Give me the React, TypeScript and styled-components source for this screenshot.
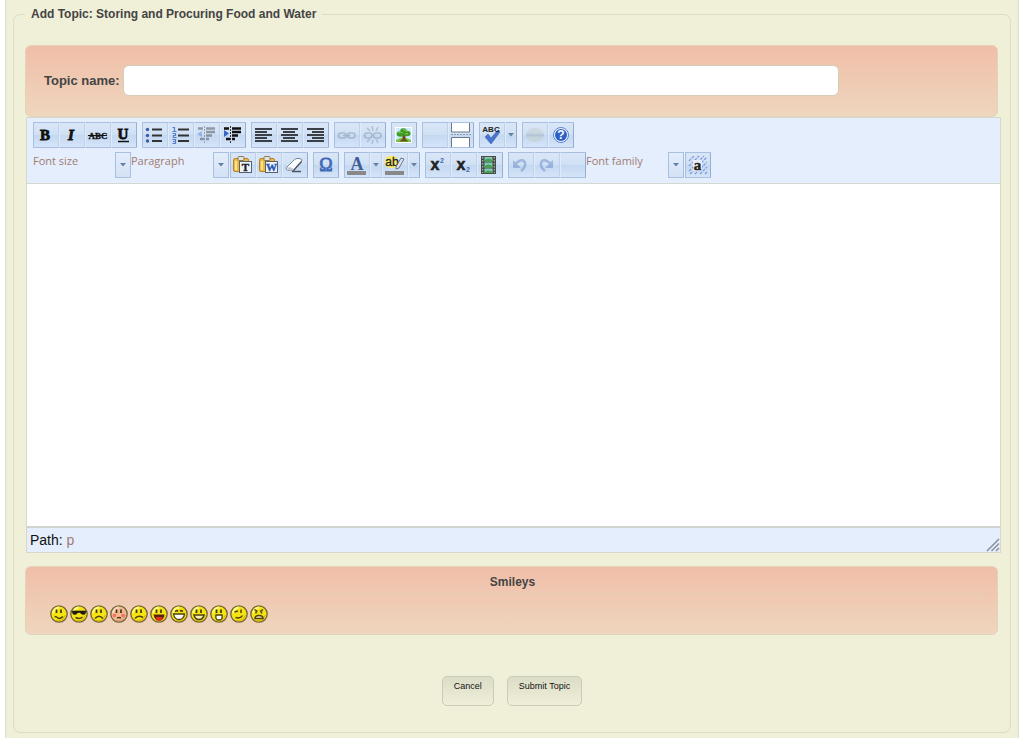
import React, { useState } from 'react';
import styled, { createGlobalStyle } from 'styled-components';

const GlobalStyle = createGlobalStyle`
  *, *::before, *::after { box-sizing: border-box; }
  body {
    margin: 0;
    background: #fff;
    font-family: "Liberation Sans", Arial, sans-serif;
    color: #444;
  }
`;

const Page = styled.main`
  min-height: 100vh;
  margin: 0 4px 0 5px;
  padding: 6px 7px 5px;
  background: #f0efd8;
  border: solid #dbdccb;
  border-width: 0 1px;
`;

const TopicFieldset = styled.fieldset`
  margin: 0;
  min-width: 0;
  padding: 23px 9px 26px 11px;
  border: 1px solid #dcdcc4;
  border-radius: 7px;
`;

const Legend = styled.legend`
  padding: 0 6px;
  font-size: 12px;
  line-height: 16px;
  font-weight: bold;
`;

const Panel = styled.section`
  margin-right: 3px;
  border: 1px solid #e3d3b8;
  border-radius: 6px;
  background: linear-gradient(#f0bea8, #efd6be);
`;

const NamePanel = styled(Panel)`
  display: flex;
  align-items: center;
  gap: 3px;
  height: 72px;
  padding: 0 158px 1px 18px;
`;

const NameLabel = styled.label`
  font-size: 13px;
  font-weight: bold;
  white-space: nowrap;
`;

const NameInput = styled.input`
  flex: 1;
  min-width: 0;
  height: 31px;
  padding: 0 8px;
  border: 1px solid #d3cdb9;
  border-radius: 6px;
  background: #fff;
  font: 13px "Liberation Sans", Arial, sans-serif;
`;

const Editor = styled.section`
  margin-left: 1px;
  border: 1px solid #d6d8cc;
`;

const Toolbar = styled.div`
  display: flex;
  flex-direction: column;
  gap: 4px;
  padding: 4px 6px 5px;
  background: #e5eefd;
  border-bottom: 1px solid #d4d7d2;
`;

const ToolRow = styled.div`
  display: flex;
  flex-wrap: wrap;
  gap: 5px;
`;

const Cluster = styled.div`
  display: flex;
  gap: 1px;
`;

const Group = styled.div`
  display: flex;
`;

const ToolButton = styled.button<{ $narrow?: boolean }>`
  display: flex;
  align-items: center;
  justify-content: center;
  width: ${p => (p.$narrow ? 12 : 26)}px;
  height: 26px;
  padding: 0;
  border: 1px solid #a8bfdf;
  border-left-color: #e0ebfa;
  border-right-color: #bfd2ec;
  background: linear-gradient(#d9e6f7 0%, #d0e0f4 50%, #c4d8f1 51%, #d5e4f8 100%);
  &:first-child { border-left-color: #a8bfdf; border-radius: 1px 0 0 1px; }
  &:last-child { border-right-color: #94aed4; border-radius: 0 1px 1px 0; }
  &:disabled svg { opacity: 0.35; }
`;

const ListBox = styled.div`
  display: grid;
  grid-template-columns: 82px 16px;
  height: 26px;
`;

const ListSelect = styled.select`
  grid-area: 1 / 1 / 2 / 3;
  appearance: none;
  height: 26px;
  padding: 0 16px 8px 0;
  border: 0;
  background: transparent;
  color: #a17c70;
  font: 11px/18px "Open Sans", sans-serif;
`;

const ListArrow = styled.span`
  grid-area: 1 / 2;
  display: flex;
  align-items: center;
  justify-content: center;
  border: 1px solid #a8bfdf;
  background: linear-gradient(#e3edfb, #d3e2f6);
  pointer-events: none;
`;

const EditArea = styled.textarea`
  display: block;
  width: 100%;
  height: 342px;
  padding: 8px;
  border: 0;
  resize: none;
  background: #fff;
  font: 14px "Liberation Sans", Arial, sans-serif;
`;

const StatusBar = styled.div`
  display: flex;
  align-items: flex-end;
  justify-content: space-between;
  height: 26px;
  padding-left: 3px;
  border-top: 2px solid #d0d4ce;
  background: #e5eefd;
  color: #111;
  font-size: 14px;
  line-height: 24px;
`;

const PathLink = styled.a`
  color: #a17c70;
  text-decoration: none;
`;

const SmileyPanel = styled(Panel)`
  height: 69px;
  margin-top: 13px;
  padding: 8px 12px 0 14px;
`;

const SmileyTitle = styled.h2`
  margin: 0;
  padding-bottom: 4px;
  border-bottom: 1px solid #e3ceb6;
  font-size: 12px;
  line-height: 14px;
  text-align: center;
`;

const SmileyRow = styled.div`
  display: flex;
  gap: 2px;
  padding: 11px 10px 0;
`;

const SmileyButton = styled.button`
  display: flex;
  width: 18px;
  height: 18px;
  padding: 0;
  border: 0;
  background: none;
`;

const Actions = styled.div`
  display: flex;
  justify-content: center;
  gap: 13px;
  margin: 41px 2px 0 0;
`;

const ActionButton = styled.button`
  height: 30px;
  padding: 0 11px 10px;
  border: 1px solid #cbccb6;
  border-radius: 5px;
  background: linear-gradient(#dcddc6, #f0efda);
  color: #111;
  font: 9px/18px "Liberation Sans", Arial, sans-serif;
`;

const Svg = ({ children }: { children?: React.ReactNode }) => (
  <svg width="20" height="20" viewBox="0 0 20 20" aria-hidden="true">{children}</svg>
);

const Caret = () => (
  <svg width="6" height="4" viewBox="0 0 6 4" aria-hidden="true">
    <path d="M0 0h6L3 3.500z" fill="#6582a6" />
  </svg>
);

const serif = '"Liberation Serif", serif';

const Letter = ({ ch, italic, underline }: { ch: string; italic?: boolean; underline?: boolean }) => (
  <Svg>
    <text x="9" y={underline ? 14 : 15} textAnchor="middle" fontFamily={serif} fontSize="15" fontWeight="bold"
      fontStyle={italic ? 'italic' : 'normal'} stroke="#111" strokeWidth=".8" fill="#111">{ch}</text>
    {underline && <path d="M4 16.500h11" stroke="#111" strokeWidth="1.500" />}
  </Svg>
);

const AlignIcon = ({ kind }: { kind: 'left' | 'center' | 'right' }) => {
  const x = { left: 1, center: 3, right: 6 }[kind];
  return (
    <Svg>
      <path d={`M1 4h17M${x} 7h12M1 10h17M${x} 13h12M1 16h17`} stroke="#3b3f48" strokeWidth="2" />
    </Svg>
  );
};

const BulletIcon = () => (
  <Svg>
    <path d="M7 4.500h10M7 10.500h10M7 16h10" stroke="#333" strokeWidth="1.800" />
    <g fill="#3b5cab"><circle cx="2.500" cy="4.500" r="1.700" /><circle cx="2.500" cy="10.500" r="1.700" /><circle cx="2.500" cy="16" r="1.700" /></g>
  </Svg>
);

const NumberIcon = () => (
  <Svg>
    <path d="M7 4.500h11M7 10.500h11M7 16h11" stroke="#333" strokeWidth="1.800" />
    <path d="M1.500 2.500h2v4M1.500 6.500h4M1.500 8.500h3v2h-2v2h3M1.500 14.500h3v4h-3M2 16.500h2" stroke="#5a7ccc" strokeWidth="1.200" fill="none" />
  </Svg>
);

const IndentIcon = ({ out }: { out?: boolean }) => (
  <Svg>
    <path d="M1 3.500h5M9 3.500h9M9 7h9M9 10.500h6M9 14h3M3 14h4" stroke="#111" strokeWidth="2.400" />
    <path d="M7.500 1v18" stroke="#333" strokeDasharray="2 1" />
    <path d={out ? 'M5 6v6L0 9z' : 'M1 5v7l5-3.500z'} fill="#3565c5" />
  </Svg>
);

const LinkIcon = ({ broken }: { broken?: boolean }) => (
  <Svg>
    <g fill="none" stroke="#64758d" strokeWidth="1.600">
      <rect x="1.500" y="8" width="7.500" height="5" rx="2.500" />
      <rect x="10.500" y="8" width="7.500" height="5" rx="2.500" />
      {!broken && <path d="M6 10.500h7" />}
      {broken && <path d="M9 1l1 5M15 2l-2 4M4 3l3 3M9 19l1-4M15 18l-2-4M4 17l3-3" strokeWidth="1.300" />}
    </g>
  </Svg>
);

const TreeIcon = () => (
  <Svg>
    <rect x="1.500" y="2.500" width="16" height="15" fill="#cdebfa" stroke="#fff" />
    <path d="M2 15q7-5 15 0v2H2z" fill="#76c840" />
    <path d="M8.500 9h3v5l3 2.500H5l3.500-2.500z" fill="#6d4b20" />
    <g fill="#3f9926"><ellipse cx="6.500" cy="9" rx="3.800" ry="2.800" /><circle cx="9.500" cy="6.500" r="3.300" /><ellipse cx="13" cy="8.500" rx="3.500" ry="2.800" /></g>
    <path d="M4.500 8q2-2 4 0M9 5q3-1 4 2M11 9q2-1 3 0" stroke="#8bd44c" fill="none" />
  </Svg>
);

const PageBreakIcon = () => (
  <svg width="20" height="24" viewBox="0 0 20 24" aria-hidden="true">
    <path d="M.5 0v9h18V0M.5 24v-9.500h18V24" fill="#fff" stroke="#6c7885" />
    <path d="M0 11.500h20" stroke="#8b9cb3" strokeDasharray="2 1" />
  </svg>
);

const SpellIcon = () => (
  <Svg>
    <path d="M3 12l3-3 3 4 7-8 2 2-9 12z" fill="#4774cf" stroke="#2f59af" strokeWidth=".5" />
    <text x="9" y="7" textAnchor="middle" fontSize="8" fontWeight="bold" fill="#222">ABC</text>
  </Svg>
);

const RuleIcon = () => (
  <Svg><ellipse cx="10" cy="10" rx="9" ry="7" fill="#c0c8b8" /><path d="M1 10h18" stroke="#97a3ae" strokeWidth="3" /></Svg>
);

const HelpIcon = () => (
  <Svg>
    <circle cx="10" cy="10" r="7.500" fill="#eef4ff" stroke="#5c84cf" />
    <circle cx="10" cy="10" r="6" fill="#2c62c7" />
    <text x="10" y="14" textAnchor="middle" fontSize="12" fontWeight="bold" fill="#fff">?</text>
  </Svg>
);

const PasteIcon = ({ letter }: { letter: string }) => (
  <Svg>
    <rect x=".5" y="3.500" width="15" height="13" rx="1.500" fill="#eeb93f" stroke="#b9842a" />
    <rect x="5" y="1.500" width="6" height="4" rx="1" fill="#e6e4da" stroke="#8a795b" />
    <path d="M3 6v9" stroke="#ffe28c" strokeWidth="2" />
    <rect x="6.500" y="6.500" width="12" height="11" fill="#eef3fa" stroke="#59616e" />
    <text x="12.500" y="16" textAnchor="middle" fontFamily={serif} fontSize="11" fontWeight="bold" stroke="currentColor" strokeWidth=".4"
      color={letter === 'T' ? '#222' : '#2858b3'} fill="currentColor">{letter}</text>
  </Svg>
);

const EraserIcon = () => (
  <Svg>
    <path d="M2 12l7-7q1.500-1.500 3-1.500h3q3 1 1.500 3L10 14q-1.500 1.500-3 1.500H4Q0 15 2 12z" fill="#fafcff" stroke="#7c8796" />
    <path d="M7 16.500h9M8.500 15.500l8-9" stroke="#4d5561" strokeWidth="1.400" fill="none" />
    <path d="M2 13q3-1.500 6 .5l-1 2H4z" fill="#c0cad9" />
  </Svg>
);

const OmegaIcon = () => (
  <Svg><text x="10" y="16" textAnchor="middle" fontFamily={serif} fontSize="18" stroke="#4169b8" strokeWidth=".8" fill="#4169b8">Ω</text></Svg>
);

const ColorIcon = () => (
  <Svg>
    <text x="10" y="15" textAnchor="middle" fontFamily={serif} fontSize="18" fontWeight="bold" fill="#3e5f96">A</text>
    <path d="M0 18h19" stroke="#888" strokeWidth="4" />
  </Svg>
);

const HighlightIcon = () => (
  <Svg>
    <rect x="0" y="1" width="13" height="12" rx="5" fill="#f7ec64" />
    <text x="7" y="11" textAnchor="middle" fontSize="12" stroke="#222" strokeWidth=".3" fill="#222">ab</text>
    <path d="M11 12l5-9 3 1-5 9-3 1z" fill="#dce5ef" stroke="#66778c" />
    <path d="M0 18h19" stroke="#888" strokeWidth="4" />
  </Svg>
);

const ScriptIcon = ({ sup }: { sup?: boolean }) => (
  <Svg>
    <text x="7" y="15" textAnchor="middle" fontSize="16" fontWeight="bold" stroke="#222" strokeWidth=".5" fill="#222">x</text>
    <text x="14" y={sup ? 8 : 17} textAnchor="middle" fontSize="7" fontWeight="bold" fill="#4169b8">2</text>
  </Svg>
);

const FilmIcon = () => (
  <Svg>
    <rect x="1" y="1" width="15" height="18" fill="#454d46" />
    <path d="M4.500 2h8v4.500h-8zM4.500 7.500h8v5h-8zM4.500 13.500h8V18h-8z" fill="#82c9b8" />
    <path d="M4.500 5q4-3 8 0v1.500h-8zM4.500 11q4-3 8 0v1.500h-8zM4.500 17q4-3 8 0v1h-8z" fill="#45a150" />
    <path d="M2.700 2v16M14.300 2v16" stroke="#b9c5ba" strokeDasharray="1.500 1.500" />
  </Svg>
);

const UndoIcon = ({ redo }: { redo?: boolean }) => (
  <Svg>
    <g transform={redo ? 'translate(18 0) scale(-1 1)' : undefined}>
      <path d="M4 9q8-7 10-1 1 4-4 8" fill="none" stroke="#4169b8" strokeWidth="2.500" />
      <path d="M2 5v8h8z" fill="#4169b8" />
    </g>
  </Svg>
);

const AttribsIcon = () => (
  <Svg>
    <path d="M1 6l5-5M1 11L11 1M1 16L16 1M2 19L19 2M7 19L19 7M12 19l7-7M17 19l2-2" stroke="#7b98df" strokeWidth="1.200" strokeDasharray="3 1" />
    <rect x="5" y="5" width="9" height="11" fill="#e8effb" />
    <text x="9.500" y="15" textAnchor="middle" fontFamily={serif} fontSize="15" fontWeight="bold" stroke="#222" strokeWidth=".5" fill="#222">a</text>
  </Svg>
);

const StrikeIcon = () => (
  <Svg>
    <text x="10" y="14" textAnchor="middle" fontFamily={serif} fontSize="9" fontWeight="bold" stroke="#111" strokeWidth=".3" fill="#111">ABC</text>
    <path d="M0 10.500h19" stroke="#111" />
  </Svg>
);

type Tool = { label: string; icon?: React.ReactNode; off?: boolean; menu?: boolean };

const topGroups: Tool[][] = [
  [
    { label: 'Bold', icon: <Letter ch="B" /> },
    { label: 'Italic', icon: <Letter ch="I" italic /> },
    { label: 'Strikethrough', icon: <StrikeIcon /> },
    { label: 'Underline', icon: <Letter ch="U" underline /> },
  ],
  [
    { label: 'Bulleted list', icon: <BulletIcon /> },
    { label: 'Numbered list', icon: <NumberIcon /> },
    { label: 'Outdent', icon: <IndentIcon out />, off: true },
    { label: 'Indent', icon: <IndentIcon /> },
  ],
  [
    { label: 'Align left', icon: <AlignIcon kind="left" /> },
    { label: 'Align center', icon: <AlignIcon kind="center" /> },
    { label: 'Align right', icon: <AlignIcon kind="right" /> },
  ],
  [
    { label: 'Link', icon: <LinkIcon />, off: true },
    { label: 'Unlink', icon: <LinkIcon broken />, off: true },
  ],
  [{ label: 'Image', icon: <TreeIcon /> }],
  [{ label: 'More' }, { label: 'Page break', icon: <PageBreakIcon /> }],
  [{ label: 'Spellchecker', icon: <SpellIcon />, menu: true }],
  [{ label: 'Horizontal rule', icon: <RuleIcon />, off: true }, { label: 'Help', icon: <HelpIcon /> }],
];

const pasteGroup: Tool[] = [
  { label: 'Paste as text', icon: <PasteIcon letter="T" /> },
  { label: 'Paste from Word', icon: <PasteIcon letter="W" /> },
  { label: 'Remove formatting', icon: <EraserIcon /> },
];

const middleGroups: Tool[][] = [
  [{ label: 'Special character', icon: <OmegaIcon /> }],
  [
    { label: 'Text color', icon: <ColorIcon />, menu: true },
    { label: 'Background color', icon: <HighlightIcon />, menu: true },
  ],
  [
    { label: 'Superscript', icon: <ScriptIcon sup /> },
    { label: 'Subscript', icon: <ScriptIcon /> },
    { label: 'Media', icon: <FilmIcon /> },
  ],
];

const historyGroup: Tool[] = [
  { label: 'Undo', icon: <UndoIcon />, off: true },
  { label: 'Redo', icon: <UndoIcon redo />, off: true },
  { label: 'Custom' },
];

const ToolGroup = ({ tools }: { tools: Tool[] }) => (
  <Group>
    {tools.map(t => (
      <React.Fragment key={t.label}>
        <ToolButton type="button" aria-label={t.label} disabled={t.off}>{t.icon}</ToolButton>
        {t.menu && <ToolButton type="button" $narrow aria-label={`${t.label} options`}><Caret /></ToolButton>}
      </React.Fragment>
    ))}
  </Group>
);

const List = ({ label }: { label: string }) => (
  <ListBox>
    <ListSelect aria-label={label}><option>{label}</option></ListSelect>
    <ListArrow><Caret /></ListArrow>
  </ListBox>
);

const dots = <path d="M6.500 4.500v3.500M11 4.500v3.500" stroke="#3d3510" strokeWidth="1.700" />;
const stroke = { fill: 'none', stroke: '#4d4210', strokeWidth: 1.5 };

const faces: { name: string; pink?: boolean; art: React.ReactNode }[] = [
  { name: 'Smile', art: <>{dots}<path d="M4.500 11.500q2 0 3.500 1.500t5-1.500" {...stroke} /></> },
  { name: 'Cool', art: <><path d="M2 6h14l-1 3q-3 1.500-5-1.500H8Q6 10.500 3 9z" fill="#1d1b10" stroke="#1d1b10" strokeWidth=".6" /><path d="M5.500 12.500q4 2 7-.5" {...stroke} /></> },
  { name: 'Sad', art: <>{dots}<path d="M5 13.500q4-4.500 8 0" {...stroke} /></> },
  { name: 'Embarrassed', pink: true, art: <>{dots}<path d="M7 13q2-1 4 0" {...stroke} /><g fill="#ed735e"><circle cx="4.500" cy="10.500" r="1.800" /><circle cx="13" cy="10.500" r="1.800" /></g></> },
  { name: 'Frown', art: <>{dots}<path d="M5 13.500q3-4 8-1" {...stroke} /></> },
  { name: 'Tongue', art: <>{dots}<path d="M3.500 9.500h11q-1 6-5.500 6t-5.500-6z" fill="#5a2210" /><path d="M6 12h6q0 4-3 4t-3-4z" fill="#e52d20" /></> },
  { name: 'Laugh', art: <><path d="M5 6.500l2-1 1 1M10 6.500l1-1 2 1" {...stroke} /><path d="M3.500 9h11q-1 5.500-5.500 5.500T3.500 9z" fill="#fff" stroke="#4d4210" strokeWidth="1.300" /></> },
  { name: 'Grin', art: <>{dots}<path d="M4 10h10q-1 4.500-5 4.500T4 10z" fill="#f8efb8" stroke="#4d4210" strokeWidth="1.500" /></> },
  { name: 'Surprised', art: <>{dots}<path d="M6 10h6q1 5-3 5t-3-5z" fill="#fff" stroke="#4d4210" strokeWidth="1.400" /></> },
  { name: 'Wink', art: <><path d="M4.500 7l3.500-1M11 4.500v3.500M5.500 12.500q5 1.500 7-2" {...stroke} /></> },
  { name: 'Angry', art: <><path d="M4.500 4.500l3 2M13 4.500l-3 2M6 6.500v2M11.500 6.500v2" {...stroke} /><path d="M5 13.500q0-3 4-3t4 3z" fill="#f8efb8" stroke="#4d4210" strokeWidth="1.500" /></> },
];

const Face = ({ pink, children }: { pink?: boolean; children: React.ReactNode }) => (
  <svg width="18" height="18" viewBox="0 0 18 18" aria-hidden="true">
    <circle cx="9" cy="9" r="8.200" fill={pink ? '#f4b793' : '#f6e312'} stroke="#716438" strokeWidth="1.300" />
    <path d="M3 8q1-5 6-5.500" stroke={pink ? '#fcdcc5' : '#fffa8c'} strokeWidth="1.800" fill="none" />
    <path d="M5 15.500q8 1.500 10.500-5.500" stroke={pink ? '#dd9670' : '#d9ae0d'} fill="none" />
    {children}
  </svg>
);

export default function App() {
  const [name, setName] = useState('');
  return (
    <>
      <GlobalStyle />
      <Page>
        <form onSubmit={e => e.preventDefault()}>
          <TopicFieldset>
            <Legend>Add Topic: Storing and Procuring Food and Water</Legend>
            <NamePanel>
              <NameLabel htmlFor="topic-name">Topic name:</NameLabel>
              <NameInput id="topic-name" value={name} onChange={e => setName(e.target.value)} />
            </NamePanel>
            <Editor aria-label="Message editor">
              <Toolbar role="toolbar" aria-label="Formatting">
                <ToolRow>{topGroups.map(g => <ToolGroup key={g[0].label} tools={g} />)}</ToolRow>
                <ToolRow>
                  <Cluster>
                    <Group><List label="Font size" /><List label="Paragraph" /></Group>
                    <ToolGroup tools={pasteGroup} />
                  </Cluster>
                  {middleGroups.map(g => <ToolGroup key={g[0].label} tools={g} />)}
                  <Cluster>
                    <Group><ToolGroup tools={historyGroup} /><List label="Font family" /></Group>
                    <ToolGroup tools={[{ label: 'Attributes', icon: <AttribsIcon /> }]} />
                  </Cluster>
                </ToolRow>
              </Toolbar>
              <EditArea aria-label="Message" />
              <StatusBar>
                <span>Path: <PathLink href="#p">p</PathLink></span>
                <svg width="14" height="14" viewBox="0 0 14 14" aria-hidden="true">
                  <path d="M1 13L13 1M5.500 13L13 5.500M10 13l3-3" stroke="#8b8f96" strokeWidth="1.500" />
                </svg>
              </StatusBar>
            </Editor>
            <SmileyPanel>
              <SmileyTitle>Smileys</SmileyTitle>
              <SmileyRow>
                {faces.map(f => (
                  <SmileyButton type="button" key={f.name} aria-label={f.name}><Face pink={f.pink}>{f.art}</Face></SmileyButton>
                ))}
              </SmileyRow>
            </SmileyPanel>
            <Actions>
              <ActionButton type="button">Cancel</ActionButton>
              <ActionButton type="submit">Submit Topic</ActionButton>
            </Actions>
          </TopicFieldset>
        </form>
      </Page>
    </>
  );
}
